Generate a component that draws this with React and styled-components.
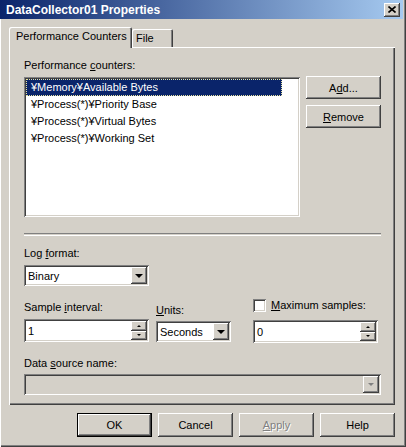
import React from "react";
import styled, { createGlobalStyle, css } from "styled-components";

const Face = "#d4d0c8";
const Shadow = "#808080";
const DarkShadow = "#404040";

const GlobalStyle = createGlobalStyle`
  html, body {
    margin: 0;
    padding: 0;
    background: ${Face};
  }
  body {
    font-family: "Liberation Sans", Arial, sans-serif;
    font-size: 11px;
    color: #000;
  }
`;

const raised = css`
  box-shadow: inset -1px -1px ${DarkShadow}, inset 1px 1px #fff,
    inset -2px -2px ${Shadow}, inset 2px 2px ${Face};
`;

const sunken = css`
  box-shadow: inset 1px 1px ${Shadow}, inset -1px -1px #fff,
    inset 2px 2px ${DarkShadow}, inset -2px -2px ${Face};
`;

const Window = styled.div`
  width: 406px;
  height: 447px;
  box-sizing: border-box;
  padding: 0 3px 3px 0;
  display: flex;
  flex-direction: column;
  background: ${Face};
  box-shadow: inset 1px 0 #fff, inset -1px -1px ${DarkShadow},
    inset -2px -2px ${Shadow};
`;

const TitleBar = styled.div`
  height: 19px;
  display: flex;
  align-items: center;
  justify-content: space-between;
  padding: 0 3px 0 6px;
  background: linear-gradient(to right, #0a246a, #a6caf0);
  color: #fff;
  font-weight: bold;
  font-size: 12px;
`;

const CloseButton = styled.div`
  width: 16px;
  height: 14px;
  display: flex;
  align-items: center;
  justify-content: center;
  background: ${Face};
  ${raised};
`;

const Body = styled.div`
  padding: 8px 8px 0 9px;
  display: flex;
  flex-direction: column;
`;

const TabStrip = styled.div`
  display: flex;
  align-items: flex-end;
  height: 20px;
  position: relative;
  z-index: 1;
`;

const Tab = styled.div`
  box-sizing: border-box;
  height: ${(p) => (p.$active ? 21 : 18)}px;
  margin-bottom: ${(p) => (p.$active ? -1 : 0)}px;
  padding: ${(p) => (p.$active ? "3px 6px 0 7px" : "3px 4px 0 4px")};
  width: ${(p) => p.$width}px;
  background: ${Face};
  border-radius: 2px 2px 0 0;
  box-shadow: inset 1px 1px #fff, inset -1px 0 ${DarkShadow},
    inset -2px 0 ${Shadow};
  line-height: 13px;
  white-space: nowrap;
`;

const Panel = styled.div`
  box-sizing: border-box;
  width: 386px;
  height: 358px;
  padding: 12px 0 0 15px;
  box-shadow: inset 1px 1px #fff, inset -1px -1px ${DarkShadow},
    inset -2px -2px ${Shadow};
  display: flex;
  flex-direction: column;
`;

const Label = styled.div`
  line-height: 13px;
  height: 13px;
  white-space: nowrap;
  margin-top: ${(p) => p.$top || 0}px;
`;

const TopRow = styled.div`
  display: flex;
  align-items: flex-start;
  gap: 6px;
  margin-top: 5px;
`;

const ListBox = styled.div`
  box-sizing: border-box;
  width: 276px;
  height: 140px;
  padding: 2px;
  background: #fff;
  ${sunken};
`;

const ListItem = styled.div`
  box-sizing: border-box;
  width: 256px;
  height: 17px;
  line-height: 17px;
  padding-left: 5px;
  white-space: nowrap;
  ${(p) =>
    p.$selected &&
    css`
      background: #0a246a;
      color: #fff;
      outline: 1px dotted #e8e4a0;
      outline-offset: -1px;
    `}
`;

const ButtonColumn = styled.div`
  display: flex;
  flex-direction: column;
  gap: 6px;
  margin-top: -1px;
`;

const Button = styled.div`
  box-sizing: border-box;
  width: 75px;
  height: ${(p) => p.$height || 23}px;
  display: flex;
  align-items: center;
  justify-content: center;
  background: ${Face};
  ${raised};
  ${(p) =>
    p.$default &&
    css`
      box-shadow: inset 0 0 0 1px #000, inset -2px -2px ${DarkShadow},
        inset 2px 2px #fff, inset -3px -3px ${Shadow};
    `}
  ${(p) =>
    p.$disabled &&
    css`
      color: ${Shadow};
      text-shadow: 1px 1px #fff;
    `}
`;

const Separator = styled.div`
  width: 357px;
  height: 1px;
  margin-top: 16px;
  border-top: 1px solid ${Shadow};
  border-bottom: 1px solid #fff;
`;

const Field = styled.div`
  box-sizing: border-box;
  width: ${(p) => p.$width}px;
  height: ${(p) => p.$height}px;
  margin-top: ${(p) => p.$top || 0}px;
  padding: 2px;
  display: flex;
  align-items: stretch;
  background: ${(p) => (p.$disabled ? Face : "#fff")};
  ${sunken};
`;

const FieldText = styled.div`
  flex: 1;
  display: flex;
  align-items: center;
  padding-left: 2px;
  white-space: nowrap;
`;

const DropButton = styled.div`
  width: 16px;
  display: flex;
  align-items: center;
  justify-content: center;
  background: ${Face};
  ${raised};
`;

const Arrow = styled.div`
  width: 0;
  height: 0;
  border-left: ${(p) => p.$size}px solid transparent;
  border-right: ${(p) => p.$size}px solid transparent;
  ${(p) =>
    p.$up
      ? css`
          border-bottom: ${p.$size}px solid ${p.$color || "#000"};
        `
      : css`
          border-top: ${p.$size}px solid ${p.$color || "#000"};
        `}
`;

const SpinButtons = styled.div`
  width: 16px;
  display: flex;
  flex-direction: column;
`;

const SpinButton = styled.div`
  flex: 1;
  display: flex;
  align-items: center;
  justify-content: center;
  background: ${Face};
  ${raised};
`;

const SettingsRow = styled.div`
  display: flex;
  align-items: flex-end;
  margin-top: 13px;
`;

const Column = styled.div`
  display: flex;
  flex-direction: column;
  margin-left: ${(p) => p.$left || 0}px;
  margin-bottom: ${(p) => p.$bottom || 0}px;
`;

const CheckRow = styled.div`
  display: flex;
  align-items: center;
  gap: 5px;
  height: 13px;
  line-height: 13px;
`;

const CheckBox = styled.div`
  box-sizing: border-box;
  width: 13px;
  height: 13px;
  background: #fff;
  ${sunken};
`;

const Footer = styled.div`
  display: flex;
  justify-content: flex-end;
  gap: 6px;
  margin-top: 8px;
`;

function Combo({ width, height, value, disabled, top }) {
  return (
    <Field $width={width} $height={height} $disabled={disabled} $top={top}>
      <FieldText>{value}</FieldText>
      <DropButton>
        <Arrow $size={disabled ? 3 : 4} $color={disabled ? Shadow : "#000"} />
      </DropButton>
    </Field>
  );
}

function Spin({ width, value, top }) {
  return (
    <Field $width={width} $height={23} $top={top}>
      <FieldText>{value}</FieldText>
      <SpinButtons>
        <SpinButton>
          <Arrow $size={2} $up />
        </SpinButton>
        <SpinButton>
          <Arrow $size={2} />
        </SpinButton>
      </SpinButtons>
    </Field>
  );
}

const counters = [
  "¥Memory¥Available Bytes",
  "¥Process(*)¥Priority Base",
  "¥Process(*)¥Virtual Bytes",
  "¥Process(*)¥Working Set",
];

export default function App() {
  return (
    <>
      <GlobalStyle />
      <Window>
        <TitleBar>
          <span>DataCollector01 Properties</span>
          <CloseButton>
            <svg width="8" height="7" viewBox="0 0 8 7">
              <path d="M0.5 0.5 L7.5 6.5 M7.5 0.5 L0.5 6.5" stroke="#000" strokeWidth="1.6" />
            </svg>
          </CloseButton>
        </TitleBar>
        <Body>
          <TabStrip>
            <Tab $active $width={123}>Performance Counters</Tab>
            <Tab $width={41}>File</Tab>
          </TabStrip>
          <Panel>
            <Label>
              Performance <u>c</u>ounters:
            </Label>
            <TopRow>
              <ListBox>
                {counters.map((c, i) => (
                  <ListItem key={c} $selected={i === 0}>
                    {c}
                  </ListItem>
                ))}
              </ListBox>
              <ButtonColumn>
                <Button>
                  A<u>d</u>d...
                </Button>
                <Button>
                  <u>R</u>emove
                </Button>
              </ButtonColumn>
            </TopRow>
            <Separator />
            <Label $top={11}>
              Log <u>f</u>ormat:
            </Label>
            <Combo width={125} height={21} value="Binary" top={5} />
            <SettingsRow>
              <Column>
                <Label>
                  Sample <u>i</u>nterval:
                </Label>
                <Spin width={125} value="1" top={5} />
              </Column>
              <Column $left={7}>
                <Label>
                  <u>U</u>nits:
                </Label>
                <Combo width={75} height={21} value="Seconds" top={4} />
              </Column>
              <Column $left={22} $bottom={-1}>
                <CheckRow>
                  <CheckBox />
                  <span>
                    <u>M</u>aximum samples:
                  </span>
                </CheckRow>
                <Spin width={125} value="0" top={8} />
              </Column>
            </SettingsRow>
            <Label $top={15}>
              Data <u>s</u>ource name:
            </Label>
            <Combo width={357} height={21} value="" disabled top={4} />
          </Panel>
          <Footer>
            <Button $default $height={24}>OK</Button>
            <Button $height={24}>Cancel</Button>
            <Button $height={24} $disabled>
              <u>A</u>pply
            </Button>
            <Button $height={24}>Help</Button>
          </Footer>
        </Body>
      </Window>
    </>
  );
}
